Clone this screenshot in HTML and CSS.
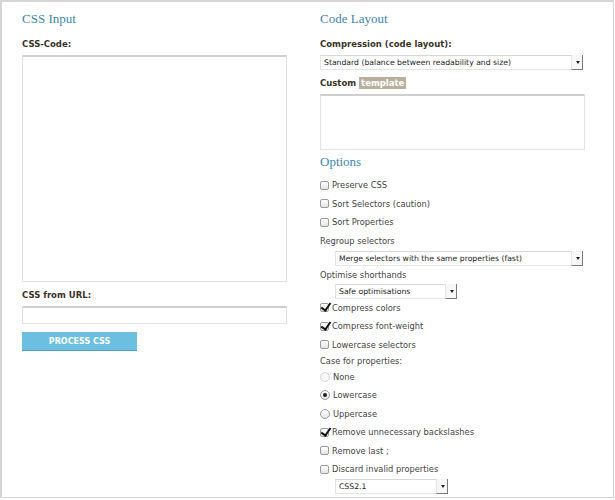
FILE: index.html
```html
<!DOCTYPE html>
<html lang="en">
<head>
    <meta charset="UTF-8">
    <title>CSS Formatter and Optimiser</title>
    <link rel="stylesheet" href="styles.css">
</head>
<body>
    <div class="page">
        <div class="col">
            <h2>CSS Input</h2>
            <label class="field-label" for="css">CSS-Code:</label>
            <textarea id="css" class="code"></textarea>

            <label class="field-label url-label" for="url">CSS from URL:</label>
            <input type="text" id="url" class="url-input">

            <button class="btn">PROCESS CSS</button>
        </div>

        <div class="col">
            <h2>Code Layout</h2>
            <label class="field-label" for="template">Compression (code layout):</label>
            <div class="select full">
                <select id="template">
                    <option>Standard (balance between readability and size)</option>
                </select>
            </div>

            <div class="field-label custom">Custom <span class="tag">template</span></div>
            <textarea class="custom-code"></textarea>

            <h2 class="options-title">Options</h2>

            <div class="options">
                <label class="opt"><input type="checkbox"> Preserve CSS</label>
                <label class="opt"><input type="checkbox"> Sort Selectors (caution)</label>
                <label class="opt"><input type="checkbox"> Sort Properties</label>
                <div class="opt-label">Regroup selectors</div>
                <div class="select-row">
                    <div class="select merge">
                        <select><option>Merge selectors with the same properties (fast)</option></select>
                    </div>
                </div>
                <div class="opt-label">Optimise shorthands</div>
                <div class="select-row short">
                    <div class="select safe">
                        <select><option>Safe optimisations</option></select>
                    </div>
                </div>
                <label class="opt"><input type="checkbox" checked> Compress colors</label>
                <label class="opt"><input type="checkbox" checked> Compress font-weight</label>
                <label class="opt"><input type="checkbox"> Lowercase selectors</label>
                <div class="opt-label tight">Case for properties:</div>
                <label class="opt"><input type="radio" name="case" disabled> None</label>
                <label class="opt"><input type="radio" name="case" checked> Lowercase</label>
                <label class="opt"><input type="radio" name="case"> Uppercase</label>
                <label class="opt"><input type="checkbox" checked> Remove unnecessary backslashes</label>
                <label class="opt"><input type="checkbox"> Remove last ;</label>
                <label class="opt"><input type="checkbox"> Discard invalid properties</label>
                <div class="select-row short">
                    <div class="select level">
                        <select><option>CSS2.1</option></select>
                    </div>
                </div>
            </div>
        </div>
    </div>
</body>
</html>
```

FILE: styles.css
```css
* {
    margin: 0;
    padding: 0;
    box-sizing: border-box;
}

body {
    background: #fff;
    font-family: 'DejaVu Sans', Verdana, sans-serif;
    color: #444;
}

.page {
    width: 614px;
    height: 498px;
    border: 2px solid #d6d6d6;
    border-right-width: 1px;
    border-bottom-width: 1px;
    padding: 9px 0 0 20px;
    display: grid;
    grid-template-columns: 265px 265px;
    column-gap: 33px;
    align-items: start;
}

.col {
    display: flex;
    flex-direction: column;
    align-items: flex-start;
}

h2 {
    font-family: 'Liberation Serif', Georgia, serif;
    font-weight: normal;
    font-size: 13px;
    line-height: 16px;
    color: #3d86a9;
}

.field-label {
    display: block;
    margin-top: 11px;
    font-size: 8.5px;
    line-height: 12px;
    font-weight: bold;
    color: #3b3226;
}

textarea,
.url-input {
    display: block;
    border: 1px solid #e2e2e2;
    border-top: 2px solid #cfcfcf;
    background: #fff;
    resize: none;
    outline: none;
}

.code {
    width: 265px;
    height: 227px;
    margin-top: 5px;
}

.url-label {
    margin-top: 7px;
}

.url-input {
    width: 265px;
    height: 18px;
    margin-top: 5px;
}

.btn {
    margin-top: 8px;
    width: 115px;
    height: 19px;
    border: none;
    border-bottom: 1px solid #4b9fc0;
    background: #6cbfe0;
    color: #fff;
    font-family: 'DejaVu Sans', Verdana, sans-serif;
    font-size: 8px;
    font-weight: bold;
    cursor: pointer;
}

/* selects */
.select {
    position: relative;
    height: 15px;
}

.select select {
    appearance: none;
    -webkit-appearance: none;
    display: block;
    width: 100%;
    height: 15px;
    border: 1px solid #e4e4e4;
    border-top-color: #d8d8d8;
    background: #fff;
    padding: 0 14px 0 3px;
    font-family: 'DejaVu Sans', Verdana, sans-serif;
    font-size: 7.7px;
    line-height: 13px;
    color: #222;
    outline: none;
}

.select::after {
    content: "";
    position: absolute;
    right: 0;
    top: 0;
    width: 10px;
    height: 14px;
    border-left: 1px solid #e4e4e4;
    border-right: 1px solid #7a7a7a;
    border-bottom: 1px solid #7a7a7a;
    background: #f7f7f7;
}

.select::before {
    content: "";
    position: absolute;
    right: 3px;
    top: 6px;
    border-top: 3px solid #222;
    border-left: 2px solid transparent;
    border-right: 2px solid transparent;
    z-index: 1;
}

.full {
    width: 263px;
    margin-top: 5px;
}

.custom {
    margin-top: 7px;
}

.tag {
    display: inline-block;
    background: #b9af9d;
    color: #fff;
    padding: 0 2px;
    line-height: 12px;
}

.custom-code {
    width: 265px;
    height: 56px;
    margin-top: 5px;
}

.options-title {
    margin-top: 4px;
}

/* option rows */
.options {
    margin-top: 6px;
    display: flex;
    flex-direction: column;
    width: 100%;
}

.opt {
    display: flex;
    align-items: center;
    gap: 3px;
    height: 18.5px;
    font-size: 8.3px;
    color: #444;
}

.opt-label {
    display: flex;
    align-items: center;
    height: 18px;
    font-size: 8.3px;
    color: #444;
}

.opt-label.tight {
    height: 13.5px;
}

.select-row {
    height: 16px;
    padding-left: 15px;
    padding-top: 1px;
}

.select-row.short {
    height: 15px;
    padding-top: 0;
}

.merge {
    width: 248px;
}

.safe {
    width: 122px;
}

.level {
    width: 113px;
}

input[type="checkbox"],
input[type="radio"] {
    appearance: none;
    -webkit-appearance: none;
    position: relative;
    width: 9px;
    height: 9px;
    border: 1px solid #9a9a9a;
    border-radius: 2px;
    background: linear-gradient(#fff, #e4e4e4);
    flex-shrink: 0;
}

input[type="radio"] {
    border-radius: 50%;
    width: 10px;
    height: 10px;
}

input[type="radio"]:disabled {
    border-color: #d4d4d4;
    background: #f6f6f6;
}

input[type="checkbox"]:checked::after {
    content: "";
    position: absolute;
    left: 2px;
    top: -3px;
    width: 4px;
    height: 8px;
    border-right: 2px solid #111;
    border-bottom: 2px solid #111;
    transform: rotate(35deg);
}

input[type="radio"]:checked::after {
    content: "";
    position: absolute;
    left: 2px;
    top: 2px;
    width: 4px;
    height: 4px;
    border-radius: 50%;
    background: #1e1e1e;
}
```
